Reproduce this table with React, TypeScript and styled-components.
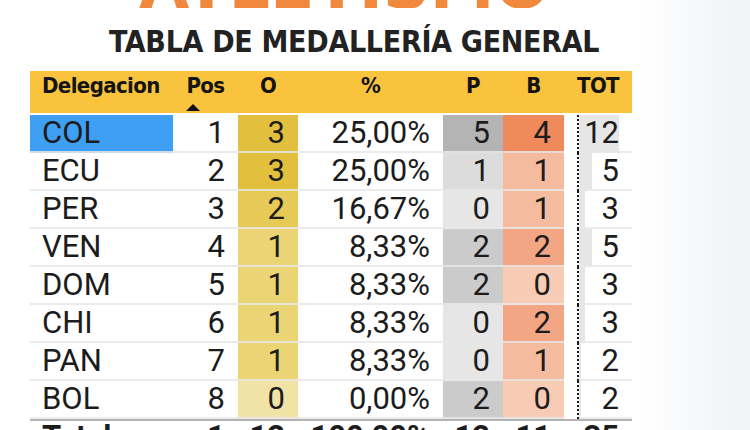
import React from 'react';
import styled, { createGlobalStyle } from 'styled-components';

const GlobalStyle = createGlobalStyle`
  html, body {
    margin: 0;
    padding: 0;
    overflow: hidden;
    height: 100%;
  }
  body {
    background: linear-gradient(90deg, #ffffff 0, #ffffff 640px, #f3f5f8 720px, #f1f3f6 100%);
    font-family: Roboto, "Liberation Sans", sans-serif;
  }
`;

const Page = styled.div`
  width: 750px;
  height: 430px;
  overflow: hidden;
  box-sizing: border-box;
  padding-left: 30px;
`;

const Hero = styled.div`
  height: 8px;
  overflow: hidden;
  padding-left: 109px;
  font-family: "DejaVu Sans", sans-serif;
  font-weight: 700;
  font-size: 65px;
  line-height: 65px;
  color: #f0883e;
  white-space: nowrap;
  display: flow-root;
  margin-bottom: 1px;
`;

const HeroText = styled.div`
  margin-top: -47px;
`;

const Title = styled.h1`
  margin: 19px 0 14px;
  padding-left: 79px;
  font-family: "DejaVu Sans Condensed", "DejaVu Sans", sans-serif;
  font-stretch: condensed;
  font-weight: 700;
  font-size: 30px;
  line-height: 30px;
  letter-spacing: -0.3px;
  color: #222222;
  white-space: nowrap;
`;

const Table = styled.div`
  width: 602px;
  display: flex;
  flex-direction: column;
`;

const HeaderRow = styled.div`
  display: grid;
  grid-template-columns: 143px 65px 60px 145px 60px 61px 68px;
  height: 42px;
  background: #f9c33e;
  margin-bottom: 2px;
`;

const HeadCell = styled.div<{ $left?: boolean }>`
  display: flex;
  justify-content: ${(p) => (p.$left ? 'flex-start' : 'center')};
  padding: 4px 0 0 ${(p) => (p.$left ? '12px' : '0')};
  font-family: "DejaVu Sans Condensed", "DejaVu Sans", sans-serif;
  font-stretch: condensed;
  font-weight: 700;
  font-size: 22px;
  line-height: 22px;
  letter-spacing: -0.6px;
  color: #141414;
`;

const SortLabel = styled.div`
  display: flex;
  flex-direction: column;
  align-items: flex-start;
`;

const SortArrow = styled.span`
  margin-top: 7px;
  width: 0;
  height: 0;
  border-left: 7px solid transparent;
  border-right: 7px solid transparent;
  border-bottom: 7px solid #111111;
`;

const Row = styled.div`
  display: grid;
  grid-template-columns: 143px 65px 60px 145px 60px 61px 15px 53px;
`;

const Cell = styled.div<{ $bg?: string; $left?: boolean }>`
  box-sizing: border-box;
  height: 38px;
  border-bottom: 2px solid rgba(232, 232, 232, 0.85);
  background: ${(p) => p.$bg || 'transparent'};
  text-align: ${(p) => (p.$left ? 'left' : 'right')};
  padding: 0 ${(p) => (p.$left ? '0' : '13px')} 0 ${(p) => (p.$left ? '12px' : '0')};
  font-size: 31px;
  line-height: 36px;
  color: #1c1c1c;
  white-space: nowrap;
`;

const Divider = styled.div`
  box-sizing: border-box;
  height: 38px;
  border-right: 2px dotted #1a1a1a;
`;

const TotalRow = styled.div`
  display: grid;
  grid-template-columns: 143px 65px 60px 145px 60px 61px 68px;
  border-top: 2px solid #b3b3b3;
`;

const TotalCell = styled.div<{ $left?: boolean }>`
  text-align: ${(p) => (p.$left ? 'left' : 'right')};
  padding: 0 ${(p) => (p.$left ? '0' : '13px')} 0 ${(p) => (p.$left ? '12px' : '0')};
  font-size: 31px;
  font-weight: 700;
  line-height: 32px;
  color: #1c1c1c;
  white-space: nowrap;
`;

type Rec = { d: string; pos: number; o: number; pct: string; p: number; b: number; tot: number };

const rows: Rec[] = [
  { d: 'COL', pos: 1, o: 3, pct: '25,00%', p: 5, b: 4, tot: 12 },
  { d: 'ECU', pos: 2, o: 3, pct: '25,00%', p: 1, b: 1, tot: 5 },
  { d: 'PER', pos: 3, o: 2, pct: '16,67%', p: 0, b: 1, tot: 3 },
  { d: 'VEN', pos: 4, o: 1, pct: '8,33%', p: 2, b: 2, tot: 5 },
  { d: 'DOM', pos: 5, o: 1, pct: '8,33%', p: 2, b: 0, tot: 3 },
  { d: 'CHI', pos: 6, o: 1, pct: '8,33%', p: 0, b: 2, tot: 3 },
  { d: 'PAN', pos: 7, o: 1, pct: '8,33%', p: 0, b: 1, tot: 2 },
  { d: 'BOL', pos: 8, o: 0, pct: '0,00%', p: 2, b: 0, tot: 2 },
];

const gold: Record<number, string> = { 3: '#e2bf3c', 2: '#e7c957', 1: '#ebd474', 0: '#f1e3a6' };
const silver: Record<number, string> = { 5: '#b4b4b4', 2: '#cbcbcb', 1: '#dcdcdc', 0: '#e6e6e6' };
const bronze: Record<number, string> = { 4: '#ee8a5c', 2: '#f2a684', 1: '#f5bb9f', 0: '#f8cbb4' };

const maxTot = 12;
const barWidth = (t: number) => Math.max(0, ((t - 1.5) / (maxTot - 1.5)) * 40);

export default function App() {
  return (
    <>
      <GlobalStyle />
      <Page>
        <Hero>
          <HeroText>ATLETISMO</HeroText>
        </Hero>
        <Title>TABLA DE MEDALLERÍA GENERAL</Title>
        <Table>
          <HeaderRow>
            <HeadCell $left>Delegacion</HeadCell>
            <HeadCell>
              <SortLabel>
                Pos
                <SortArrow />
              </SortLabel>
            </HeadCell>
            <HeadCell>O</HeadCell>
            <HeadCell>%</HeadCell>
            <HeadCell>P</HeadCell>
            <HeadCell>B</HeadCell>
            <HeadCell>TOT</HeadCell>
          </HeaderRow>
          {rows.map((r, i) => (
            <Row key={r.d}>
              <Cell $left $bg={i === 0 ? '#3f9ff2' : undefined}>{r.d}</Cell>
              <Cell>{r.pos}</Cell>
              <Cell $bg={gold[r.o]}>{r.o}</Cell>
              <Cell>{r.pct}</Cell>
              <Cell $bg={silver[r.p]}>{r.p}</Cell>
              <Cell $bg={bronze[r.b]}>{r.b}</Cell>
              <Divider />
              <Cell
                style={{
                  background: `linear-gradient(90deg, #e6e6e6 ${barWidth(r.tot)}px, transparent ${barWidth(r.tot)}px)`,
                }}
              >
                {r.tot}
              </Cell>
            </Row>
          ))}
          <TotalRow>
            <TotalCell $left>Total</TotalCell>
            <TotalCell>1</TotalCell>
            <TotalCell>12</TotalCell>
            <TotalCell>100,00%</TotalCell>
            <TotalCell>12</TotalCell>
            <TotalCell>11</TotalCell>
            <TotalCell>35</TotalCell>
          </TotalRow>
        </Table>
      </Page>
    </>
  );
}
